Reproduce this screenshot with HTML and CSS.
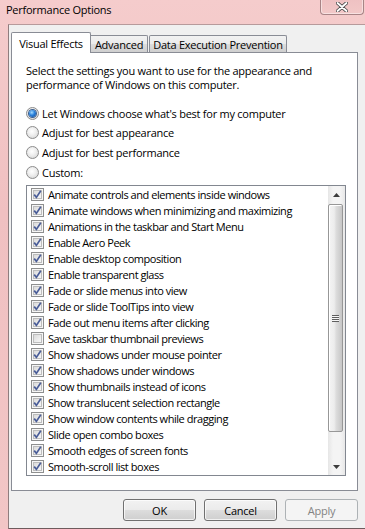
FILE: index.html
```html
<!DOCTYPE html>
<html>
<head>
<meta charset="utf-8">
<title>Performance Options</title>
<link rel="stylesheet" href="styles.css">
</head>
<body>
<div class="window">
  <div class="titlebar">
    <span class="title">Performance Options</span>
    <div class="close">
      <svg width="12" height="10" viewBox="0 0 12 10">
        <path d="M1.5 1 L10.5 9 M10.5 1 L1.5 9" stroke="#4a4a4a" stroke-width="3.6" stroke-linecap="round"/>
        <path d="M1.5 1 L10.5 9 M10.5 1 L1.5 9" stroke="#ffffff" stroke-width="1.8" stroke-linecap="round"/>
      </svg>
    </div>
  </div>
  <div class="frame">
    <div class="client">
      <div class="tabs">
        <div class="tab tab-active">Visual Effects</div>
        <div class="tab tab-adv">Advanced</div>
        <div class="tab tab-dep">Data Execution Prevention</div>
      </div>
      <div class="panel">
        <p class="intro">Select the settings you want to use for the appearance and<br>performance of Windows on this computer.</p>
        <div class="radios">
          <div class="radio-row"><span class="rb"><span class="dot"></span></span><span>Let Windows choose what's best for my computer</span></div>
          <div class="radio-row r2"><span class="rb"></span><span>Adjust for best appearance</span></div>
          <div class="radio-row"><span class="rb"></span><span>Adjust for best performance</span></div>
          <div class="radio-row"><span class="rb"></span><span>Custom:</span></div>
        </div>
        <div class="listbox">
          <div class="items">
            <div class="item"><span class="cb"><svg viewBox="0 0 11 11" width="11" height="11"><path class="ck" d="M2.2 5.6 L4.4 8.4 L8.8 1.8"/></svg></span>Animate controls and elements inside windows</div>
            <div class="item"><span class="cb"><svg viewBox="0 0 11 11" width="11" height="11"><path class="ck" d="M2.2 5.6 L4.4 8.4 L8.8 1.8"/></svg></span>Animate windows when minimizing and maximizing</div>
            <div class="item"><span class="cb"><svg viewBox="0 0 11 11" width="11" height="11"><path class="ck" d="M2.2 5.6 L4.4 8.4 L8.8 1.8"/></svg></span>Animations in the taskbar and Start Menu</div>
            <div class="item"><span class="cb"><svg viewBox="0 0 11 11" width="11" height="11"><path class="ck" d="M2.2 5.6 L4.4 8.4 L8.8 1.8"/></svg></span>Enable Aero Peek</div>
            <div class="item"><span class="cb"><svg viewBox="0 0 11 11" width="11" height="11"><path class="ck" d="M2.2 5.6 L4.4 8.4 L8.8 1.8"/></svg></span>Enable desktop composition</div>
            <div class="item"><span class="cb"><svg viewBox="0 0 11 11" width="11" height="11"><path class="ck" d="M2.2 5.6 L4.4 8.4 L8.8 1.8"/></svg></span>Enable transparent glass</div>
            <div class="item"><span class="cb"><svg viewBox="0 0 11 11" width="11" height="11"><path class="ck" d="M2.2 5.6 L4.4 8.4 L8.8 1.8"/></svg></span>Fade or slide menus into view</div>
            <div class="item"><span class="cb"><svg viewBox="0 0 11 11" width="11" height="11"><path class="ck" d="M2.2 5.6 L4.4 8.4 L8.8 1.8"/></svg></span>Fade or slide ToolTips into view</div>
            <div class="item"><span class="cb"><svg viewBox="0 0 11 11" width="11" height="11"><path class="ck" d="M2.2 5.6 L4.4 8.4 L8.8 1.8"/></svg></span>Fade out menu items after clicking</div>
            <div class="item"><span class="cb"></span>Save taskbar thumbnail previews</div>
            <div class="item"><span class="cb"><svg viewBox="0 0 11 11" width="11" height="11"><path class="ck" d="M2.2 5.6 L4.4 8.4 L8.8 1.8"/></svg></span>Show shadows under mouse pointer</div>
            <div class="item"><span class="cb"><svg viewBox="0 0 11 11" width="11" height="11"><path class="ck" d="M2.2 5.6 L4.4 8.4 L8.8 1.8"/></svg></span>Show shadows under windows</div>
            <div class="item"><span class="cb"><svg viewBox="0 0 11 11" width="11" height="11"><path class="ck" d="M2.2 5.6 L4.4 8.4 L8.8 1.8"/></svg></span>Show thumbnails instead of icons</div>
            <div class="item"><span class="cb"><svg viewBox="0 0 11 11" width="11" height="11"><path class="ck" d="M2.2 5.6 L4.4 8.4 L8.8 1.8"/></svg></span>Show translucent selection rectangle</div>
            <div class="item"><span class="cb"><svg viewBox="0 0 11 11" width="11" height="11"><path class="ck" d="M2.2 5.6 L4.4 8.4 L8.8 1.8"/></svg></span>Show window contents while dragging</div>
            <div class="item"><span class="cb"><svg viewBox="0 0 11 11" width="11" height="11"><path class="ck" d="M2.2 5.6 L4.4 8.4 L8.8 1.8"/></svg></span>Slide open combo boxes</div>
            <div class="item"><span class="cb"><svg viewBox="0 0 11 11" width="11" height="11"><path class="ck" d="M2.2 5.6 L4.4 8.4 L8.8 1.8"/></svg></span>Smooth edges of screen fonts</div>
            <div class="item"><span class="cb"><svg viewBox="0 0 11 11" width="11" height="11"><path class="ck" d="M2.2 5.6 L4.4 8.4 L8.8 1.8"/></svg></span>Smooth-scroll list boxes</div>
          </div>
          <div class="scrollbar">
            <div class="sb-btn"><svg width="7" height="4" viewBox="0 0 7 4"><polygon points="0,4 3.5,0 7,4" fill="#3c3c3c"/></svg></div>
            <div class="sb-track">
              <div class="thumb"><span class="grip"></span></div>
            </div>
            <div class="sb-btn"><svg width="7" height="4" viewBox="0 0 7 4"><polygon points="0,0 7,0 3.5,4" fill="#3c3c3c"/></svg></div>
          </div>
        </div>
      </div>
      <div class="buttons">
        <div class="btn">OK</div>
        <div class="btn">Cancel</div>
        <div class="btn btn-disabled">Apply</div>
      </div>
    </div>
  </div>
</div>
</body>
</html>
```
FILE: styles.css
```css
* { box-sizing: border-box; }
html, body { margin: 0; padding: 0; }
body {
  width: 365px;
  height: 529px;
  overflow: hidden;
  font-family: "Open Sans", "Noto Sans", sans-serif;
  font-size: 11px;
  letter-spacing: -0.25px;
  color: #000;
  background: #f0c4c4;
}
.window {
  width: 365px;
  height: 529px;
  display: flex;
  flex-direction: column;
  background: linear-gradient(to bottom, #f5cccc 0%, #f0c0c1 40%, #f2c6c6 100%);
}
.titlebar {
  height: 24px;
  flex: none;
  display: flex;
  align-items: flex-start;
}
.title {
  padding-left: 6px;
  line-height: 20px;
  color: #000;
}
.close {
  margin-left: auto;
  margin-right: 1px;
  margin-top: -3px;
  width: 44px;
  height: 18px;
  border: 1px solid #a88486;
  border-top: none;
  border-radius: 0 0 4px 4px;
  box-shadow: inset 0 0 0 1px rgba(255,255,255,0.45);
  background: linear-gradient(to bottom, #eec0c1, #f2c8c8);
  display: flex;
  align-items: center;
  justify-content: center;
  padding-top: 2px;
}
.frame {
  flex: 1;
  display: flex;
  padding-left: 8px;
}
.client {
  flex: 1;
  background: #f0f0f0;
  border-left: 1px solid #8f7d7e;
  border-top: 1px solid #b79a9b;
  border-bottom: 1px solid #6e5b5d;
  padding: 7px 0 0 2px;
  display: flex;
  flex-direction: column;
}
.tabs {
  display: flex;
  align-items: flex-end;
  height: 21px;
  margin-bottom: -1px;
  position: relative;
  z-index: 1;
}
.tab {
  height: 17px;
  margin-bottom: 1px;
  border: 1px solid #898c95;
  border-bottom: none;
  border-radius: 2px 2px 0 0;
  background: linear-gradient(to bottom, #f2f2f2 0%, #ebebeb 50%, #dddddd 50%, #cfcfcf 100%);
  display: flex;
  align-items: center;
  justify-content: center;
  line-height: 1;
  white-space: nowrap;
}
.tab-active {
  width: 80px;
  height: 21px;
  margin-bottom: 0;
  background: #fff;
}
.tab-adv {
  width: 57px;
  border-left: none;
  border-radius: 0 2px 0 0;
}
.tab-dep {
  width: 138px;
  margin-left: 1px;
}
.panel {
  width: 347px;
  height: 439px;
  flex: none;
  background: #fff;
  border: 1px solid #898c95;
  padding: 11px 0 0 14px;
}
.intro {
  margin: 0;
  line-height: 14px;
}
.radios {
  margin-top: 11px;
  display: flex;
  flex-direction: column;
}
.radio-row {
  height: 20px;
  display: flex;
  align-items: center;
  gap: 3px;
}
.radio-row.r2 { height: 19px; }
.rb {
  width: 13px;
  height: 13px;
  flex: none;
  border-radius: 50%;
  border: 1px solid #8c8c8c;
  background: radial-gradient(circle at 45% 40%, #ffffff 0%, #f0f0f0 40%, #cfcfcf 100%);
  display: flex;
  align-items: center;
  justify-content: center;
}
.dot {
  width: 7px;
  height: 7px;
  border-radius: 50%;
  background: radial-gradient(circle at 40% 35%, #a6dcff 0%, #2a82dc 45%, #0c3f8c 100%);
  box-shadow: 0 0 0 1px #3a5f8f;
}
.listbox {
  margin-top: 3px;
  width: 320px;
  height: 291px;
  border: 1px solid #828790;
  display: flex;
  background: #fff;
}
.items {
  flex: 1;
  padding-left: 4px;
  letter-spacing: -0.45px;
}
.item {
  height: 16px;
  display: flex;
  align-items: center;
  gap: 4px;
  white-space: nowrap;
}
.cb {
  width: 13px;
  height: 13px;
  flex: none;
  border: 1px solid #8e8f8f;
  background: linear-gradient(135deg, #d2d2d2 0%, #eeeeee 60%, #fbfbfb 100%);
  box-shadow: inset 0 0 0 1px #f6f6f6, inset 0 0 0 2px #bdbdbd;
  display: flex;
  align-items: center;
  justify-content: center;
}
.ck {
  fill: none;
  stroke: #4a5d98;
  stroke-width: 1.7;
}
.scrollbar {
  width: 17px;
  flex: none;
  display: flex;
  flex-direction: column;
  background: linear-gradient(to right, #e6e6e6 0%, #f4f4f4 30%, #f4f4f4 70%, #e8e8e8 100%);
}
.sb-btn {
  height: 17px;
  flex: none;
  display: flex;
  align-items: center;
  justify-content: center;
}
.sb-track {
  flex: 1;
  padding-top: 1px;
}
.thumb {
  width: 15px;
  height: 228px;
  border: 1px solid #979797;
  border-radius: 2px;
  background: linear-gradient(to right, #f4f4f4 0%, #ececec 40%, #dcdcdc 55%, #c6c6c6 100%);
  box-shadow: inset 1px 1px 0 #ffffff;
  display: flex;
  align-items: center;
  justify-content: center;
}
.grip {
  width: 7px;
  height: 7px;
  background: repeating-linear-gradient(to bottom, #5f5f5f 0 1px, #f6f6f6 1px 2px);
}
.buttons {
  margin-top: 8px;
  width: 347px;
  display: flex;
  justify-content: flex-end;
  gap: 8px;
}
.btn {
  width: 73px;
  height: 22px;
  border: 1px solid #707070;
  border-radius: 3px;
  background: linear-gradient(to bottom, #f2f2f2 0%, #ebebeb 50%, #dddddd 50%, #cfcfcf 100%);
  box-shadow: inset 0 0 0 1px rgba(255,255,255,0.7);
  display: flex;
  align-items: center;
  justify-content: center;
}
.btn-disabled {
  border-color: #adb2b5;
  background: #f4f4f4;
  box-shadow: none;
  color: #838383;
}
```
